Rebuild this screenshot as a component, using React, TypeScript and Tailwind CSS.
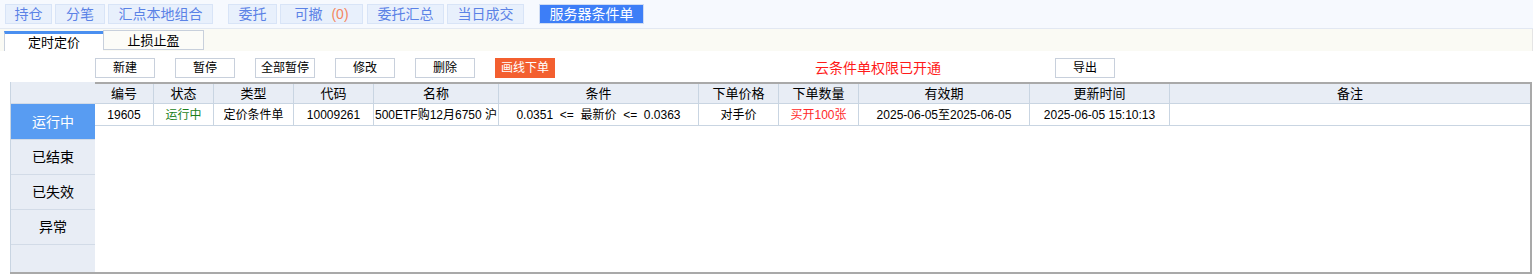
import React from "react";

const font = { fontFamily: '"Liberation Sans", "Noto Sans CJK SC", sans-serif' };

const topBtns: { label: string; w: string; ml: string; active?: boolean; extra?: string }[] = [
  { label: "持仓", w: "w-[47px]", ml: "ml-0" },
  { label: "分笔", w: "w-[50px]", ml: "ml-[3px]" },
  { label: "汇点本地组合", w: "w-[105px]", ml: "ml-[3px]" },
  { label: "委托", w: "w-[49px]", ml: "ml-[15px]" },
  { label: "可撤", w: "w-[83px]", ml: "ml-[3px]", extra: "(0)" },
  { label: "委托汇总", w: "w-[77px]", ml: "ml-[4px]" },
  { label: "当日成交", w: "w-[77px]", ml: "ml-[3px]" },
  { label: "服务器条件单", w: "w-[105px]", ml: "ml-[15px]", active: true },
];

const cols: { label: string; w: string }[] = [
  { label: "编号", w: "w-[59px]" },
  { label: "状态", w: "w-[60px]" },
  { label: "类型", w: "w-[80px]" },
  { label: "代码", w: "w-[80px]" },
  { label: "名称", w: "w-[125px]" },
  { label: "条件", w: "w-[200px]" },
  { label: "下单价格", w: "w-[80px]" },
  { label: "下单数量", w: "w-[80px]" },
  { label: "有效期", w: "w-[171px]" },
  { label: "更新时间", w: "w-[140px]" },
  { label: "备注", w: "flex-1" },
];

const row: { v: string; cls?: string }[] = [
  { v: "19605" },
  { v: "运行中", cls: "text-[#1b7f1b]" },
  { v: "定价条件单" },
  { v: "10009261" },
  { v: "500ETF购12月6750 沪" },
  { v: "0.0351 <= 最新价 <= 0.0363" },
  { v: "对手价" },
  { v: "买开100张", cls: "text-[#ff2a2a]" },
  { v: "2025-06-05至2025-06-05" },
  { v: "2025-06-05 15:10:13" },
  { v: "" },
];

const actionBtns: { label: string; ml: string; orange?: boolean }[] = [
  { label: "新建", ml: "ml-[95px]" },
  { label: "暂停", ml: "ml-[20px]" },
  { label: "全部暂停", ml: "ml-[20px]" },
  { label: "修改", ml: "ml-[20px]" },
  { label: "删除", ml: "ml-[20px]" },
  { label: "画线下单", ml: "ml-[20px]", orange: true },
];

const side = ["运行中", "已结束", "已失效", "异常"];

export default function App() {
  return (
    <div className="w-[1533px] h-[274px] bg-white overflow-hidden flex flex-col" style={font}>
      {/* top bar */}
      <div className="h-[29px] shrink-0 bg-[#f6f9fe] border-b border-[#e2e8f2] flex items-start pt-[4px] pl-[5px]">
        {topBtns.map((b) => (
          <div
            key={b.label}
            className={`${b.w} ${b.ml} h-[20px] flex items-center justify-center text-[14px] leading-none border ${
              b.active
                ? "bg-[#3d7ef7] border-[#cfdcf3] text-white"
                : "bg-[#e8f0fc] border-[#d8e4f7] text-[#5b82e6]"
            }`}
          >
            {b.label}
            {b.extra && <span className="ml-[9px] text-[#f5875e]">{b.extra}</span>}
          </div>
        ))}
      </div>

      {/* tab row */}
      <div className="h-[22px] shrink-0 bg-[#fafaf4] flex items-end pl-[4px] border-r border-[#e5e5e5]">
        <div className="w-[99px] h-[20px] bg-white border-t-[3px] border-[#4a8ff0] border-l border-l-[#c8d0dc] flex items-center justify-center text-[13px] text-black leading-none">
          定时定价
        </div>
        <div className="w-[101px] h-[20px] mb-[1px] bg-[#fcfcf8] border border-[#c8d0dc] flex items-center justify-center text-[13px] text-black leading-none">
          止损止盈
        </div>
      </div>

      {/* action row */}
      <div className="h-[31px] shrink-0 flex items-start pt-[7px]">
        {actionBtns.map((b) => (
          <div
            key={b.label}
            className={`${b.ml} w-[60px] h-[20px] flex items-center justify-center text-[12px] leading-none ${
              b.orange ? "bg-[#f35f2f] text-white" : "bg-white border border-[#c8d0dc] text-black"
            }`}
          >
            {b.label}
          </div>
        ))}
        <div className="ml-[260px] w-[240px] h-[20px] flex items-center text-[14px] text-[#ff1a1a] leading-none">
          云条件单权限已开通
        </div>
        <div className="w-[60px] h-[20px] bg-white border border-[#c8d0dc] flex items-center justify-center text-[12px] text-black leading-none">
          导出
        </div>
      </div>

      {/* table area */}
      <div className="flex flex-1 ml-[10px] mr-[1px] border-b-2 border-[#a9a9a9]">
        {/* sidebar */}
        <div className="w-[85px] shrink-0 bg-[#e8edf5] border-l border-[#c9d5e2] flex flex-col">
          <div className="h-[22px] border-b border-[#d2dbe7]" />
          {side.map((s, i) => (
            <div
              key={s}
              className={`h-[35px] flex items-center justify-center text-[14px] leading-none border-b border-[#d2dbe7] ${
                i === 0 ? "bg-[#589cf2] text-white h-[36px] border-[#589cf2]" : "text-black"
              }`}
            >
              {s}
            </div>
          ))}
          <div className="flex-1" />
        </div>

        {/* grid */}
        <div className="flex-1 flex flex-col border-t-2 border-[#a9a9a9] border-r-2">
          <div className="h-[20px] flex bg-[#e8edf5] border-b border-[#c9d5e2]">
            {cols.map((c, i) => (
              <div
                key={c.label}
                className={`${c.w} shrink-0 flex items-center justify-center text-[13px] leading-none text-black ${
                  i < cols.length - 1 ? "border-r border-[#c9d5e2]" : ""
                }`}
              >
                {c.label}
              </div>
            ))}
          </div>
          <div className="h-[22px] flex bg-white border-b border-[#c9d5e2]">
            {row.map((r, i) => (
              <div
                key={i}
                className={`${cols[i].w} shrink-0 flex items-center justify-center text-[12px] leading-none whitespace-nowrap ${
                  r.cls ?? "text-black"
                } ${i < cols.length - 1 ? "border-r border-[#c9d5e2]" : ""}`}
              >
                {i === 5 ? (
                  <span className="whitespace-pre">{r.v.replace(/ /g, "  ")}</span>
                ) : (
                  r.v
                )}
              </div>
            ))}
          </div>
          <div className="flex-1 bg-white" />
        </div>
      </div>
    </div>
  );
}
